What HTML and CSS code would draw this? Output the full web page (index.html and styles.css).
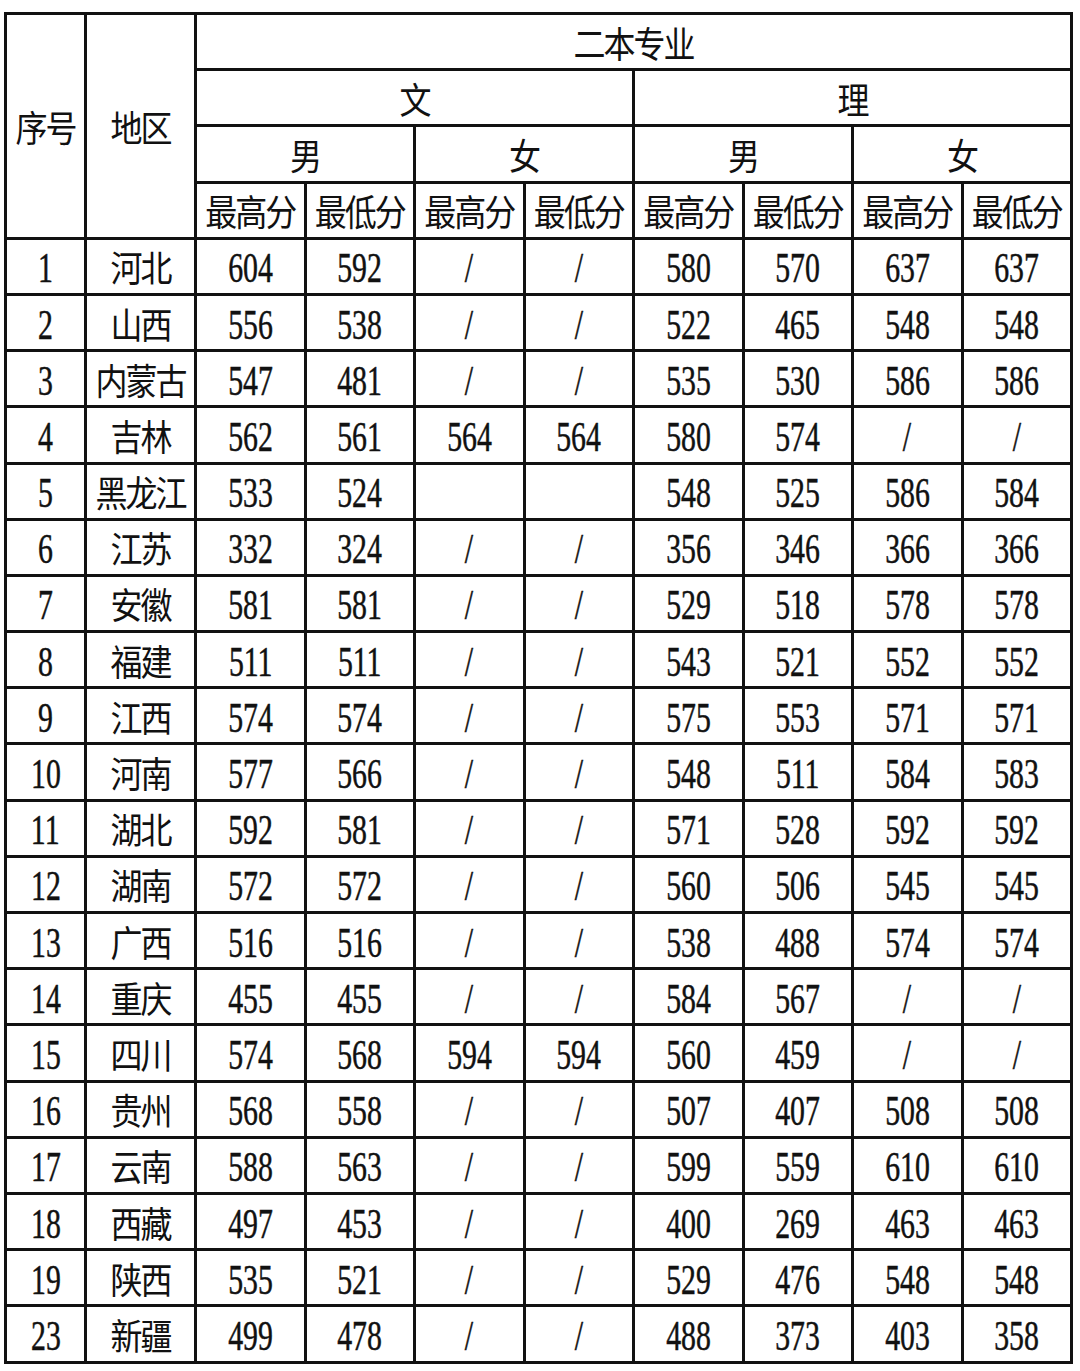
FILE: index.html
```html
<!DOCTYPE html>
<html>
<head>
<meta charset="utf-8">
<link rel="stylesheet" href="styles.css">
</head>
<body>
<table class="score">
<colgroup>
<col class="c-no"><col class="c-area">
<col><col><col><col><col><col><col><col>
</colgroup>
<thead>
<tr><th rowspan="4"><span class="zh">序号</span></th><th rowspan="4"><span class="zh">地区</span></th><th colspan="8"><span class="zh">二本专业</span></th></tr>
<tr><th colspan="4"><span class="zh">文</span></th><th colspan="4"><span class="zh">理</span></th></tr>
<tr><th colspan="2"><span class="zh">男</span></th><th colspan="2"><span class="zh">女</span></th><th colspan="2"><span class="zh">男</span></th><th colspan="2"><span class="zh">女</span></th></tr>
<tr><th><span class="zh">最高分</span></th><th><span class="zh">最低分</span></th><th><span class="zh">最高分</span></th><th><span class="zh">最低分</span></th><th><span class="zh">最高分</span></th><th><span class="zh">最低分</span></th><th><span class="zh">最高分</span></th><th><span class="zh">最低分</span></th></tr>
</thead>
<tbody>
<tr><td><span class="n">1</span></td><td><span class="zh">河北</span></td><td><span class="n">604</span></td><td><span class="n">592</span></td><td><span class="n">/</span></td><td><span class="n">/</span></td><td><span class="n">580</span></td><td><span class="n">570</span></td><td><span class="n">637</span></td><td><span class="n">637</span></td></tr>
<tr><td><span class="n">2</span></td><td><span class="zh">山西</span></td><td><span class="n">556</span></td><td><span class="n">538</span></td><td><span class="n">/</span></td><td><span class="n">/</span></td><td><span class="n">522</span></td><td><span class="n">465</span></td><td><span class="n">548</span></td><td><span class="n">548</span></td></tr>
<tr><td><span class="n">3</span></td><td><span class="zh">内蒙古</span></td><td><span class="n">547</span></td><td><span class="n">481</span></td><td><span class="n">/</span></td><td><span class="n">/</span></td><td><span class="n">535</span></td><td><span class="n">530</span></td><td><span class="n">586</span></td><td><span class="n">586</span></td></tr>
<tr><td><span class="n">4</span></td><td><span class="zh">吉林</span></td><td><span class="n">562</span></td><td><span class="n">561</span></td><td><span class="n">564</span></td><td><span class="n">564</span></td><td><span class="n">580</span></td><td><span class="n">574</span></td><td><span class="n">/</span></td><td><span class="n">/</span></td></tr>
<tr><td><span class="n">5</span></td><td><span class="zh">黑龙江</span></td><td><span class="n">533</span></td><td><span class="n">524</span></td><td></td><td></td><td><span class="n">548</span></td><td><span class="n">525</span></td><td><span class="n">586</span></td><td><span class="n">584</span></td></tr>
<tr><td><span class="n">6</span></td><td><span class="zh">江苏</span></td><td><span class="n">332</span></td><td><span class="n">324</span></td><td><span class="n">/</span></td><td><span class="n">/</span></td><td><span class="n">356</span></td><td><span class="n">346</span></td><td><span class="n">366</span></td><td><span class="n">366</span></td></tr>
<tr><td><span class="n">7</span></td><td><span class="zh">安徽</span></td><td><span class="n">581</span></td><td><span class="n">581</span></td><td><span class="n">/</span></td><td><span class="n">/</span></td><td><span class="n">529</span></td><td><span class="n">518</span></td><td><span class="n">578</span></td><td><span class="n">578</span></td></tr>
<tr><td><span class="n">8</span></td><td><span class="zh">福建</span></td><td><span class="n">511</span></td><td><span class="n">511</span></td><td><span class="n">/</span></td><td><span class="n">/</span></td><td><span class="n">543</span></td><td><span class="n">521</span></td><td><span class="n">552</span></td><td><span class="n">552</span></td></tr>
<tr><td><span class="n">9</span></td><td><span class="zh">江西</span></td><td><span class="n">574</span></td><td><span class="n">574</span></td><td><span class="n">/</span></td><td><span class="n">/</span></td><td><span class="n">575</span></td><td><span class="n">553</span></td><td><span class="n">571</span></td><td><span class="n">571</span></td></tr>
<tr><td><span class="n">10</span></td><td><span class="zh">河南</span></td><td><span class="n">577</span></td><td><span class="n">566</span></td><td><span class="n">/</span></td><td><span class="n">/</span></td><td><span class="n">548</span></td><td><span class="n">511</span></td><td><span class="n">584</span></td><td><span class="n">583</span></td></tr>
<tr><td><span class="n">11</span></td><td><span class="zh">湖北</span></td><td><span class="n">592</span></td><td><span class="n">581</span></td><td><span class="n">/</span></td><td><span class="n">/</span></td><td><span class="n">571</span></td><td><span class="n">528</span></td><td><span class="n">592</span></td><td><span class="n">592</span></td></tr>
<tr><td><span class="n">12</span></td><td><span class="zh">湖南</span></td><td><span class="n">572</span></td><td><span class="n">572</span></td><td><span class="n">/</span></td><td><span class="n">/</span></td><td><span class="n">560</span></td><td><span class="n">506</span></td><td><span class="n">545</span></td><td><span class="n">545</span></td></tr>
<tr><td><span class="n">13</span></td><td><span class="zh">广西</span></td><td><span class="n">516</span></td><td><span class="n">516</span></td><td><span class="n">/</span></td><td><span class="n">/</span></td><td><span class="n">538</span></td><td><span class="n">488</span></td><td><span class="n">574</span></td><td><span class="n">574</span></td></tr>
<tr><td><span class="n">14</span></td><td><span class="zh">重庆</span></td><td><span class="n">455</span></td><td><span class="n">455</span></td><td><span class="n">/</span></td><td><span class="n">/</span></td><td><span class="n">584</span></td><td><span class="n">567</span></td><td><span class="n">/</span></td><td><span class="n">/</span></td></tr>
<tr><td><span class="n">15</span></td><td><span class="zh">四川</span></td><td><span class="n">574</span></td><td><span class="n">568</span></td><td><span class="n">594</span></td><td><span class="n">594</span></td><td><span class="n">560</span></td><td><span class="n">459</span></td><td><span class="n">/</span></td><td><span class="n">/</span></td></tr>
<tr><td><span class="n">16</span></td><td><span class="zh">贵州</span></td><td><span class="n">568</span></td><td><span class="n">558</span></td><td><span class="n">/</span></td><td><span class="n">/</span></td><td><span class="n">507</span></td><td><span class="n">407</span></td><td><span class="n">508</span></td><td><span class="n">508</span></td></tr>
<tr><td><span class="n">17</span></td><td><span class="zh">云南</span></td><td><span class="n">588</span></td><td><span class="n">563</span></td><td><span class="n">/</span></td><td><span class="n">/</span></td><td><span class="n">599</span></td><td><span class="n">559</span></td><td><span class="n">610</span></td><td><span class="n">610</span></td></tr>
<tr><td><span class="n">18</span></td><td><span class="zh">西藏</span></td><td><span class="n">497</span></td><td><span class="n">453</span></td><td><span class="n">/</span></td><td><span class="n">/</span></td><td><span class="n">400</span></td><td><span class="n">269</span></td><td><span class="n">463</span></td><td><span class="n">463</span></td></tr>
<tr><td><span class="n">19</span></td><td><span class="zh">陕西</span></td><td><span class="n">535</span></td><td><span class="n">521</span></td><td><span class="n">/</span></td><td><span class="n">/</span></td><td><span class="n">529</span></td><td><span class="n">476</span></td><td><span class="n">548</span></td><td><span class="n">548</span></td></tr>
<tr><td><span class="n">23</span></td><td><span class="zh">新疆</span></td><td><span class="n">499</span></td><td><span class="n">478</span></td><td><span class="n">/</span></td><td><span class="n">/</span></td><td><span class="n">488</span></td><td><span class="n">373</span></td><td><span class="n">403</span></td><td><span class="n">358</span></td></tr>
</tbody>
</table>
</body>
</html>
```

FILE: styles.css
```css
html, body {
  margin: 0;
  padding: 0;
  background: #ffffff;
}

body {
  padding: 12px 0 0 4px;
  font-size: 16px;
  line-height: 1;
}

.score {
  border-collapse: collapse;
  table-layout: fixed;
  width: 1069px;
  color: #111111;
}

.c-no { width: 80px; }
.c-area { width: 110px; }

.score th,
.score td {
  border: 3px solid #111111;
  height: 53.2px;
  padding: 0;
  text-align: center;
  vertical-align: middle;
  font-weight: normal;
  overflow: hidden;
  white-space: nowrap;
  line-height: 1;
}

.zh {
  display: inline-block;
  vertical-align: middle;
  font-family: "Noto Sans CJK SC", "Noto Sans CJK TC", sans-serif;
  font-size: 32px;
  line-height: 1;
  transform: scaleY(1.14);
  letter-spacing: -2px;
}

.score .n {
  display: inline-block;
  vertical-align: middle;
  font-family: "Liberation Serif", "Times New Roman", serif;
  font-size: 42px;
  line-height: 1;
  transform: translateY(2px) scaleX(0.71);
  -webkit-text-stroke: 0.5px #111111;
}
```
